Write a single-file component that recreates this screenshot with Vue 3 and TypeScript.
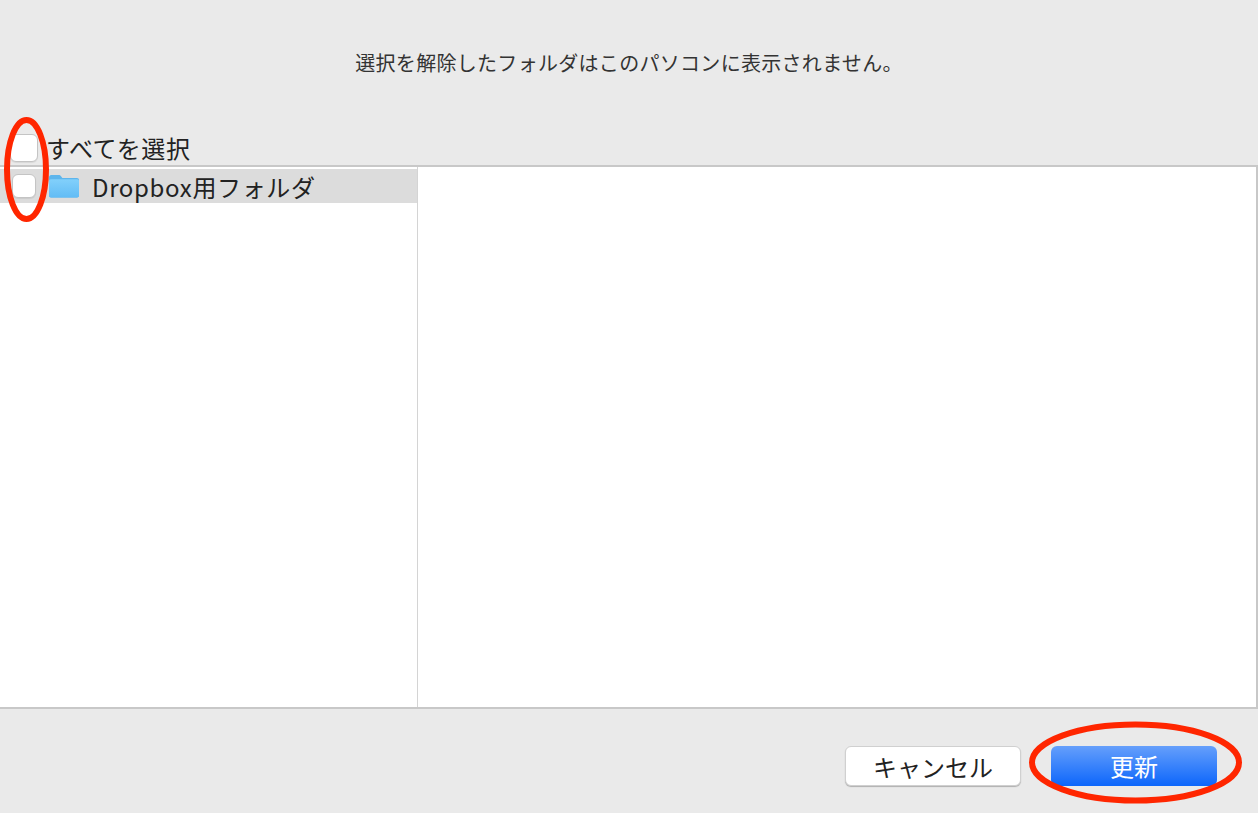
<script setup lang="ts">
const title: string = '選択を解除したフォルダはこのパソコンに表示されません。'
</script>

<template>
  <div class="dialog">
    <header class="head">
      <p class="title">{{ title }}</p>
      <label class="select-all">
        <span class="check big"></span>
        <span class="select-text">すべてを選択</span>
      </label>
    </header>

    <main class="panes">
      <div class="tree">
        <div class="row">
          <span class="check small"></span>
          <svg class="folder" width="32" height="26" viewBox="0 0 32 26">
            <defs>
              <linearGradient id="fg" x1="0" y1="0" x2="0" y2="1">
                <stop offset="0" stop-color="#82d0fb" />
                <stop offset="1" stop-color="#62bcf5" />
              </linearGradient>
            </defs>
            <path d="M1 4.5C1 3 2 2 3.2 2h7.6c1 0 1.6.4 2.2 1.2L14.4 5H29c1.2 0 2 .8 2 2v15.5c0 1.2-.8 2-2 2H3c-1.2 0-2-.8-2-2z" fill="#5db5ec" />
            <path d="M1 8c0-1 .8-1.800 1.800-1.800h26.400c1 0 1.800.8 1.800 1.800v14.500c0 1.200-.8 2-2 2H3c-1.200 0-2-.8-2-2z" fill="url(#fg)" />
          </svg>
          <span class="row-text">Dropbox用フォルダ</span>
        </div>
      </div>
      <div class="detail"></div>
    </main>

    <footer class="foot">
      <button class="btn cancel" type="button">キャンセル</button>
      <button class="btn primary" type="button">更新</button>
    </footer>

    <svg class="marks" width="1258" height="813" viewBox="0 0 1258 813">
      <ellipse cx="26.500" cy="169.500" rx="19.500" ry="49.500" />
      <ellipse cx="1135.500" cy="762.500" rx="103.500" ry="38" />
    </svg>
  </div>
</template>

<style>
html, body { margin: 0; background: #eaeaea; }
</style>

<style scoped>
.dialog {
  position: relative;
  width: 1258px;
  height: 813px;
  display: flex;
  flex-direction: column;
  overflow: hidden;
  background: #eaeaea;
  color: #222;
  font-family: "Noto Sans CJK JP", "Liberation Sans", sans-serif;
}
.head {
  height: 165px;
  flex: none;
  display: flex;
  flex-direction: column;
  box-sizing: border-box;
  padding-top: 48px;
}
.title {
  margin: 0;
  height: 30px;
  line-height: 30px;
  font-size: 20px;
  letter-spacing: 0.3px;
  text-align: center;
  color: #333;
}
.select-all {
  display: flex;
  align-items: center;
  margin-top: 55px;
  padding-left: 10px;
  height: 30px;
}
.select-text {
  margin-left: 8px;
  font-size: 24px;
  letter-spacing: 0.6px;
  line-height: 30px;
}
.check {
  flex: none;
  box-sizing: border-box;
  display: block;
  background: #fff;
  border: 1px solid #c4c4c4;
  border-radius: 6px;
  box-shadow: 0 1px 1px rgba(0, 0, 0, 0.08);
}
.big { width: 28px; height: 28px; }
.small { width: 24px; height: 24px; }
.panes {
  height: 544px;
  flex: none;
  display: flex;
  box-sizing: border-box;
  background: #fff;
  border-top: 2px solid #c8c8c8;
  border-bottom: 2px solid #c8c8c8;
}
.tree {
  width: 418px;
  flex: none;
  box-sizing: border-box;
  padding-top: 2px;
  border-right: 1px solid #d4d4d4;
}
.row {
  height: 34px;
  display: flex;
  align-items: center;
  padding-left: 12px;
  background: #dcdcdc;
}
.folder { margin-left: 12px; }
.row-text {
  margin-left: 12px;
  font-size: 24px;
  letter-spacing: 0.65px;
  line-height: 34px;
  white-space: nowrap;
  position: relative;
  top: 1px;
}
.detail { flex: 1; border-right: 2px solid #c8c8c8; }
.foot {
  flex: 1;
  display: flex;
  justify-content: flex-end;
  gap: 30px;
  padding: 37px 41px 0 0;
}
.btn {
  width: 176px;
  height: 40px;
  padding: 0;
  border-radius: 6px;
  font-family: inherit;
  font-size: 24px;
  line-height: 40px;
}
.cancel {
  background: #fff;
  color: #222;
  border: 1px solid #d0d0d0;
  box-shadow: 0 1px 1px rgba(0, 0, 0, 0.25);
}
.primary {
  width: 166px;
  color: #fff;
  border: none;
  background: linear-gradient(#659ffb, #0d66fb);
}
.marks {
  position: absolute;
  left: 0;
  top: 0;
  pointer-events: none;
}
.marks ellipse {
  fill: none;
  stroke: #ff2600;
  stroke-width: 6;
}
</style>
